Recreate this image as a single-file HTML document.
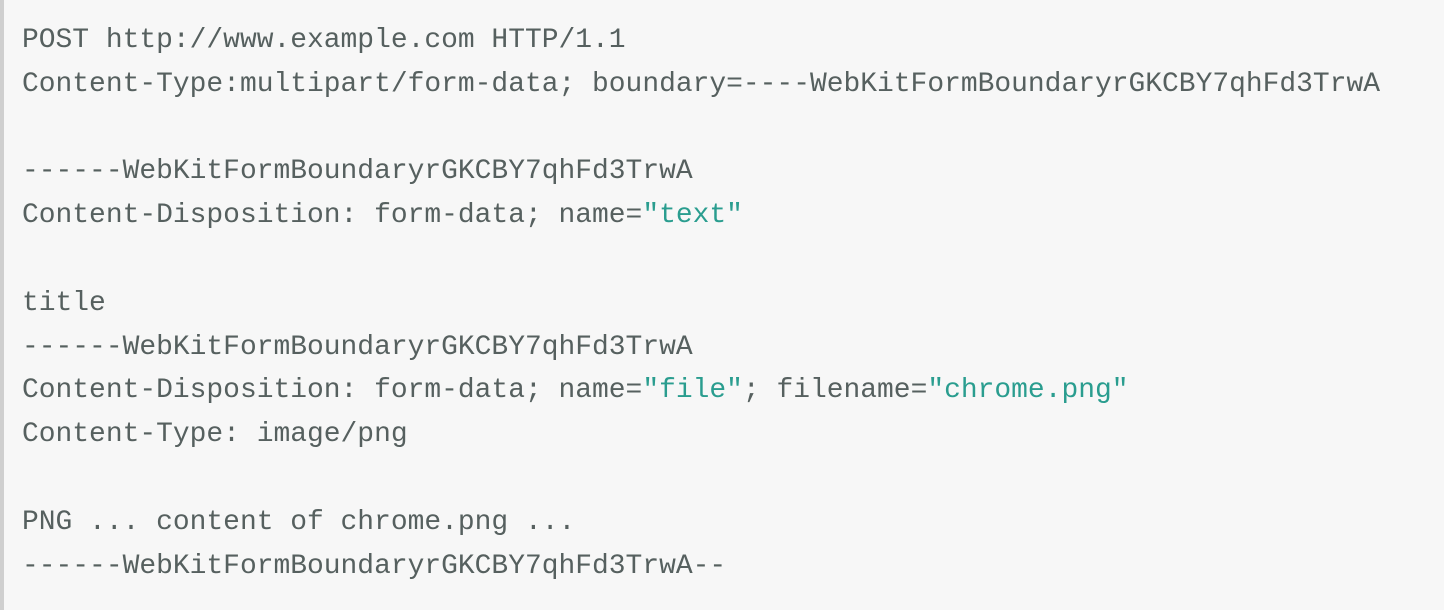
<!DOCTYPE html>
<html><head><style>
html,body{margin:0;padding:0;background:#f7f7f7;width:1444px;height:610px;overflow:hidden}
.b{position:absolute;left:0;top:0;width:4px;height:610px;background:#cfcfcf}
pre{position:absolute;left:22px;top:19px;margin:0;font-family:"Liberation Mono",monospace;font-size:27.95px;line-height:43.8px;color:#56605f;white-space:pre}
.s{color:#2a9d8f}
</style></head><body><div class="b"></div>
<pre>POST http://www.example.com HTTP/1.1
Content-Type:multipart/form-data; boundary=----WebKitFormBoundaryrGKCBY7qhFd3TrwA

------WebKitFormBoundaryrGKCBY7qhFd3TrwA
Content-Disposition: form-data; name=<span class="s">"text"</span>

title
------WebKitFormBoundaryrGKCBY7qhFd3TrwA
Content-Disposition: form-data; name=<span class="s">"file"</span>; filename=<span class="s">"chrome.png"</span>
Content-Type: image/png

PNG ... content of chrome.png ...
------WebKitFormBoundaryrGKCBY7qhFd3TrwA--</pre>
</body></html>
